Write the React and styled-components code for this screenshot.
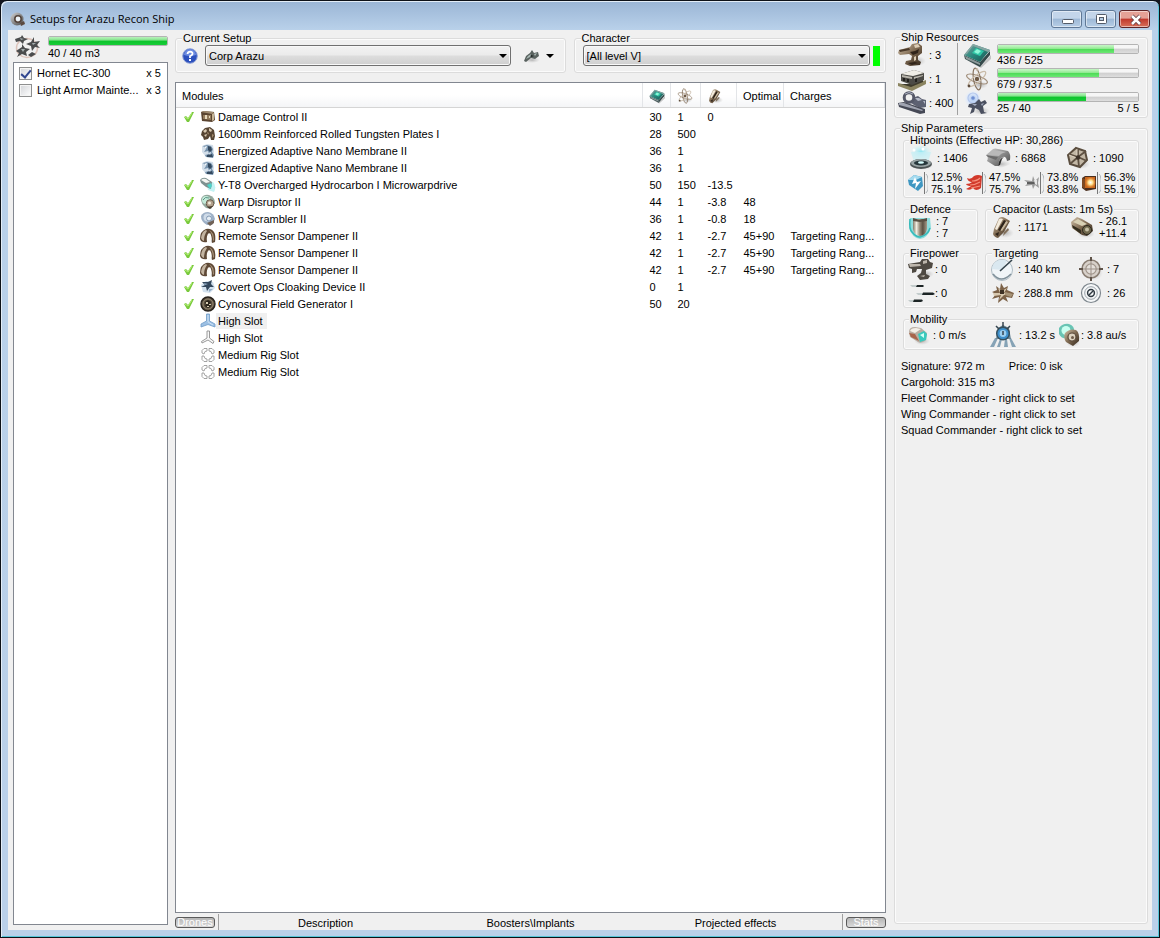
import React from 'react';
import styled, { createGlobalStyle } from 'styled-components';

const GlobalStyle = createGlobalStyle`
  * { box-sizing: border-box; }
  body {
    margin: 0;
    background: #14161f;
    color: #000;
    font: 11px/12px "Liberation Sans", Arial, sans-serif;
  }
  button, select, input { font: inherit; margin: 0; }
`;

/* ---------- icons ---------- */

/* Gradients shared by the icons; they live in the title bar icon. */
const gradients = (
  <defs>
    <linearGradient id="steel" x1="0" y1="0" x2="1" y2="1">
      <stop offset="0" stopColor="#d6d6d6" /><stop offset=".5" stopColor="#8b8b8b" /><stop offset="1" stopColor="#4a4a4a" />
    </linearGradient>
    <linearGradient id="bronze" x1="0" y1="0" x2="1" y2="1">
      <stop offset="0" stopColor="#d3c3ab" /><stop offset=".5" stopColor="#7d6850" /><stop offset="1" stopColor="#33271c" />
    </linearGradient>
    <linearGradient id="barrel" x1="0" y1="0" x2="1" y2="0">
      <stop offset="0" stopColor="#857a68" /><stop offset=".25" stopColor="#f1ece0" /><stop offset=".5" stopColor="#8f8472" />
      <stop offset=".7" stopColor="#5b5143" /><stop offset="1" stopColor="#a69b88" />
    </linearGradient>
    <linearGradient id="teal" x1="0" y1="0" x2="1" y2="1">
      <stop offset="0" stopColor="#7fa6a2" /><stop offset=".5" stopColor="#27877c" /><stop offset="1" stopColor="#1c4f4d" />
    </linearGradient>
    <radialGradient id="cyanGlow">
      <stop offset="0" stopColor="#8fe6f2" /><stop offset="1" stopColor="#d6f5f9" stopOpacity="0" />
    </radialGradient>
    <radialGradient id="blueGlow">
      <stop offset="0" stopColor="#a9c4ee" /><stop offset=".6" stopColor="#dce8fa" /><stop offset="1" stopColor="#e6effb" stopOpacity="0" />
    </radialGradient>
    <radialGradient id="fireGlow">
      <stop offset="0" stopColor="#fff" /><stop offset=".4" stopColor="#ffe08a" /><stop offset="1" stopColor="#e0701a" stopOpacity="0" />
    </radialGradient>
    <radialGradient id="shade">
      <stop offset="0" stopColor="#999" stopOpacity=".7" /><stop offset="1" stopColor="#bbb" stopOpacity="0" />
    </radialGradient>
  </defs>
);

const resistBars = (
  <>
    <path d="M16.500 0V22" stroke="#777" />
    <path d="M18 2Q21 4 20 18L18 21" fill="none" stroke="#aeb4b8" />
  </>
);

const ICONS = {
  app: [16, 16, <>
    {gradients}
    <ellipse cx="11" cy="12" rx="5" ry="3.500" fill="url(#shade)" />
    <circle cx="7" cy="8" r="6.500" fill="url(#steel)" />
    <circle cx="8" cy="8" r="3.200" fill="#eef4f8" stroke="#54453c" strokeWidth="1.600" />
    <path d="M10 12L14 10L15 13L11 15z" fill="#5b4a40" />
  </>],
  drones: [28, 26, <>
    <ellipse cx="14" cy="14" rx="10.500" ry="9.500" fill="none" stroke="#dcc3ba" strokeWidth="1.500" />
    <path d="M2 5L8 3L9 1L11 4L15 5L11 7L10 10L7 7L3 8zM13 10L18 8L21 3L21 8L27 7L24 11L27 14L22 13L19 17L18 12zM3 17L9 13L9 10L12 14L17 15L13 18L14 22L9 20L4 23L6 19zM15 21L19 18L23 20L18 23z" fill="#4a4c4d" />
    <path d="M7 4L11 5L8 6zM19 9L23 9L20 11zM8 15L12 15L10 18z" fill="#a2abac" />
  </>],
  help: [16, 16, <>
    <circle cx="8" cy="8" r="7.300" fill="#2c50bd" stroke="#8fa1d6" />
    <path d="M2 7A6 6 0 0 1 14 7Q8 9 2 7z" fill="#6c8be0" />
    <path d="M5.500 6Q5.800 3.600 8.200 3.600Q10.800 3.800 10.500 6Q10.200 7.200 8 8.200L8 10" fill="none" stroke="#fff" strokeWidth="1.800" />
    <rect x="7" y="11" width="2" height="2" fill="#fff" />
  </>],
  ship: [18, 14, <>
    <ellipse cx="9" cy="11" rx="8" ry="3" fill="url(#shade)" />
    <path d="M1 12L3 7L7 4L9 1L11 4L15 3L16 7L12 10L8 9L3 13z" fill="#59625f" />
    <path d="M5 7L8 5L7 8L3 10zM11 5L14 4L12 7z" fill="#a9b8b4" />
    <path d="M8 6L11 7L8 8z" fill="#1c2523" />
  </>],
  turret: [28, 24, <>
    <ellipse cx="19" cy="18" rx="9" ry="5" fill="url(#shade)" />
    <path d="M1 7L12 4L14 1L20 0L24 3L24 10L20 13L20 17L23 19L22 22L12 23L7 21L8 18L13 17L14 13L11 11L2 12L0 10z" fill="url(#bronze)" />
    <path d="M1 7L11 5L12 7L2 9z" fill="#4b3a2a" />
    <path d="M16 2L20 1L22 4L17 5zM16 14L18 13L18 17L16 18z" fill="#dccdb5" />
    <path d="M12 9L17 8L21 6L20 10L15 12zM10 20L17 19L20 20L14 22z" fill="#30241a" />
  </>],
  launcher: [28, 24, <>
    <path d="M0 16L13 19L28 13L28 17L14 24L0 19z" fill="#8b8460" />
    <path d="M3 17L13 20L25 15L25 13L13 17z" fill="#3d3a2c" />
    <path d="M3 7L16 3L26 6L26 13L14 18L3 14z" fill="#4c4b46" />
    <path d="M3 7L16 3L26 6L15 9z" fill="#f0eee6" />
    <path d="M4 8L14 10L14 12L4 10zM16 10L25 8V9L16 12z" fill="#b9b6ac" />
    <path d="M5 11H7V14H5zM9 12H11V15H9zM17 12L19 11V15L17 15z" fill="#22211d" />
  </>],
  calibration: [28, 24, <>
    <path d="M14 7L20 5L24 8L28 9L28 16L22 17L16 14L12 11z" fill="#5d6172" />
    <path d="M17 7L21 7L24 9L20 10zM25 10L27 10L27 13z" fill="#b5bac8" />
    <circle cx="11" cy="6.500" r="4.800" fill="#f0f0f0" stroke="#555868" strokeWidth="3" />
    <path d="M7 3Q11 0 15 3" fill="none" stroke="#a8adbd" />
    <path d="M0 12L6 11L27 18L27 22L22 23L1 16z" fill="#464956" />
    <path d="M1 12L6 12L25 19L24 20L1 14z" fill="#a0a4b1" />
  </>],
  cpu: [28, 26, <>
    <path d="M5 19L18 24L28 13V17L18 26z" fill="#c3c3c3" />
    <path d="M1 13L17 20L27 9L27 13L17 25L2 17z" fill="#35494a" />
    <path d="M2 14L17 21V23L3 17z" fill="#8c9a9a" />
    <path d="M1 13L10 2L27 8L17 20z" fill="url(#teal)" />
    <path d="M10 2L27 8L25 10L10 4L4 12L1 13z" fill="#86a5a2" />
    <path d="M9 11L13 6L21 9L17 14z" fill="#2fc7a6" />
    <path d="M11 10L14 7L18 9L15 12z" fill="#8df6d8" />
  </>],
  power: [24, 24, <>
    <ellipse cx="15" cy="18" rx="8" ry="4" fill="url(#shade)" />
    <g fill="none" stroke="#a3917e" strokeWidth="1.200">
      <ellipse cx="12" cy="12" rx="11" ry="3.500" transform="rotate(20 12 12)" />
      <ellipse cx="12" cy="12" rx="11" ry="3.500" transform="rotate(80 12 12)" stroke="#86735f" />
      <ellipse cx="12" cy="12" rx="11" ry="3.500" transform="rotate(140 12 12)" stroke="#c9bba8" />
    </g>
    <circle cx="12" cy="12" r="2.200" fill="#6e5a46" />
    <circle cx="12" cy="2.500" r="1.300" fill="#c8bba9" />
    <circle cx="4" cy="19" r="1.400" fill="#5e4c3c" />
  </>],
  dronebay: [28, 26, <>
    <circle cx="10" cy="9" r="9" fill="url(#blueGlow)" />
    <circle cx="10" cy="8" r="5" fill="none" stroke="#b3c7ec" strokeWidth="1.200" />
    <circle cx="10" cy="8" r="1.800" fill="#6f8fd2" />
    <ellipse cx="18" cy="21" rx="9" ry="4" fill="url(#shade)" />
    <path d="M6 14L12 13L16 9L18 12L22 10L24 13L20 16L21 22L24 23L18 24L16 20L12 18L11 22L7 24L9 18L5 17z" fill="#4b5060" />
    <path d="M9 14L14 14L12 16zM18 14L21 13L19 16z" fill="#a3aabd" />
  </>],
  shield: [24, 24, <>
    <ellipse cx="12" cy="6" rx="12" ry="8" fill="url(#cyanGlow)" />
    <path d="M2 6L22 6L19 16L5 16z" fill="#c7eff5" opacity=".7" />
    <circle cx="5" cy="4" r="1.500" fill="#fff" /><circle cx="14" cy="3" r="1.500" fill="#fff" />
    <ellipse cx="13" cy="20" rx="11" ry="4" fill="url(#shade)" />
    <ellipse cx="12" cy="18" rx="11" ry="5" fill="#4d5455" />
    <ellipse cx="12" cy="17" rx="10" ry="4" fill="#9aa5a6" />
    <ellipse cx="12" cy="17" rx="7" ry="2.600" fill="#27373b" />
    <ellipse cx="12" cy="16.500" rx="3" ry="1.300" fill="#d8ffff" />
  </>],
  armor: [25, 22, <>
    <path d="M4 15L15 21L25 17L22 13L12 13z" fill="url(#shade)" />
    <path d="M0 8L7 2Q9 1 12 2L22 4Q25 7 24 13L21 14Q20 9 17 10Q13 11 12 19L9 19L1 14Q3 10 0 8z" fill="url(#steel)" />
    <path d="M7 3L20 5Q15 6 13 9L2 8z" fill="#b9b9b9" />
    <path d="M0 8L12 10L10 13L2 10z" fill="#6b6b6b" />
    <path d="M12 19Q13 11 18 10L16 12L14 18z" fill="#2b2b2b" />
  </>],
  hull: [24, 24, <>
    <ellipse cx="15" cy="18" rx="9" ry="5" fill="url(#shade)" />
    <path d="M10 2L19 5L21 14L14 21L4 18L2 9z" fill="#c3b8a6" stroke="#5a4d3e" strokeWidth="2" />
    <path d="M12 11V2M12 11L20 5M12 11L21 15M12 11L13 21M12 11L4 18M12 11L3 8" stroke="#5e5142" strokeWidth="1.800" />
    <path d="M11 10L11 3M3 9L11 12" stroke="#e6dccb" strokeWidth=".8" />
    <circle cx="12" cy="11.500" r="2.200" fill="#3c3128" />
  </>],
  em: [20, 22, <>
    <path d="M0 8L6 3L14 5L15 14L10 19L1 13z" fill="#3f97c2" />
    <path d="M0 8L6 3L14 5L8 8z" fill="#a5dbef" />
    <path d="M7 5L4 12L8 11L7 17L13 9L9 10z" fill="#fff" />
    {resistBars}
  </>],
  thermal: [20, 22, <>
    <path d="M1 6Q5 8 8 4Q12 2 16 4L15 16Q10 20 7 16Q4 19 0 17Q4 15 5 14Q1 14 0 12Q4 12 6 10Q2 10 1 6z" fill="#d23a2c" />
    <path d="M6 9Q11 9 14 6M4 13Q9 13 14 10M5 16Q10 15 14 14" fill="none" stroke="#f5917d" strokeWidth="1.200" />
    {resistBars}
  </>],
  kinetic: [20, 22, <>
    <path d="M0 8L8 9L9 4L11 9L15 5L14 11L15 16L11 13L9 17L8 13L1 14L4 11z" fill="#9b9b9b" />
    <path d="M3 10L10 10L12 11L10 12L3 12z" fill="#5e5e5e" />
    <path d="M10 8L13 8L13 13L11 12z" fill="#e8e8e8" />
    {resistBars}
  </>],
  explosive: [20, 22, <>
    <path d="M1 6L4 4L15 4L15 17L5 19L1 16z" fill="#4b2f1e" />
    <path d="M4 5H14V16H4z" fill="#c8661c" />
    <circle cx="9.500" cy="10.500" r="6" fill="url(#fireGlow)" />
    <path d="M1 6L4 7V17L1 15z" fill="#7e4a22" />
    {resistBars}
  </>],
  defence: [24, 24, <>
    <path d="M2 3L22 3L23 13Q19 24 12 24Q4 23 1 13z" fill="#8fdcdc" />
    <path d="M2 4Q1 14 4 17Q8 22 12 22Q20 20 22 13" fill="none" stroke="#35b9b9" strokeWidth="1.500" />
    <path d="M5 4H19V14Q18 20 12 21Q6 20 5 14z" fill="url(#barrel)" />
    <path d="M5 3L12 5L19 3V6L12 7L5 6z" fill="#5a5043" />
  </>],
  capacitor: [24, 24, <>
    <ellipse cx="15" cy="18" rx="9" ry="5" fill="url(#shade)" />
    <path d="M9 3Q12 1 15 3L20 6L14 17L8 23Q4 22 3 19L4 14z" fill="url(#bronze)" />
    <path d="M9 4Q11 3 13 4L7 15L5 14z" fill="#f3ebdc" />
    <path d="M16 6L18 7L12 16L10 15z" fill="#c9b99f" />
    <path d="M14 5L16 6L10 16L8 15zM5 19L9 17L8 21z" fill="#2e241b" />
    <path d="M14 17L18 13L19 15L13 21z" fill="#82705b" />
  </>],
  recharge: [24, 24, <>
    <ellipse cx="16" cy="19" rx="9" ry="4" fill="url(#shade)" />
    <path d="M1 7L7 2L12 4L22 10L23 16L17 21L12 20L2 13z" fill="url(#bronze)" />
    <path d="M3 7L8 4L17 9L12 11z" fill="#d8d0b4" />
    <path d="M2 10L11 15V19L3 13z" fill="#332d1e" />
    <circle cx="17" cy="15" r="4.500" fill="#6f674c" stroke="#2c281d" />
    <circle cx="17" cy="14.500" r="2" fill="#c5bfa5" />
  </>],
  gun: [26, 24, <>
    <ellipse cx="18" cy="17" rx="8" ry="4" fill="url(#shade)" />
    <path d="M0 7L12 5L14 2L20 2L22 5L25 6L24 11L18 13L18 17L22 19L20 22L12 23L9 19L13 16L14 12L9 12L8 15L4 16L4 12L1 11z" fill="#4e4942" />
    <path d="M1 7L12 7L13 9L2 10zM15 4L19 3L19 6L15 7zM12 19L17 18L16 20z" fill="#bcb5ab" />
  </>],
  missiles: [28, 24, <>
    <path d="M2 4H13V6H4zM8 12H23V14H10zM0 19H12V21H2z" fill="#c3cccc" />
    <path d="M9 4H15L16 5L15 6H8zM15 11.500H25L27 13L25 14H14zM6 18.500H14L15 20L13 21H5z" fill="#1c2425" />
  </>],
  radar: [24, 24, <>
    <circle cx="12" cy="13" r="10.500" fill="#f0f5f8" stroke="#aebbc3" />
    <path d="M2 12A10 10 0 0 1 17 4L12 13z" fill="#dae8f0" />
    <path d="M10 14L22 3" stroke="#34434c" strokeWidth="1.600" />
    <path d="M3 17Q11 27 21 17" fill="none" stroke="#7f909a" strokeWidth="1.500" />
  </>],
  crosshair: [24, 24, <>
    <ellipse cx="15" cy="16" rx="9" ry="7" fill="url(#shade)" />
    <circle cx="12" cy="12" r="9" fill="#d8d1ca" stroke="#8a7e73" strokeWidth="1.500" />
    <circle cx="12" cy="12" r="5.200" fill="#e4dfda" stroke="#a0958b" strokeWidth="1.200" />
    <path d="M12 0V24M0 12H24" stroke="#9b9087" />
    <path d="M12 0V4M12 20V24M0 12H4M20 12H24" stroke="#5f5349" strokeWidth="2" />
  </>],
  scan: [24, 24, <>
    <path d="M2 11L7 9L6 5L10 8L11 2L14 7L18 5L17 9L24 12L22 17L16 16L18 21L13 18L8 22L9 16L2 18L6 13z" fill="#7c6248" />
    <path d="M3 12L10 12L8 7L12 10L17 7L14 12L21 13L14 14L9 19L11 14L4 15z" fill="#d7c8af" />
    <path d="M10 9L14 9L14 13L10 13z" fill="#3d3024" />
    <path d="M15 11L23 13L21 16L15 14z" fill="#a79478" />
  </>],
  signature: [22, 22, <>
    <circle cx="11" cy="11" r="9.500" fill="#f5f7f8" stroke="#7d868d" strokeWidth="1.200" />
    <circle cx="11" cy="11" r="6.300" fill="none" stroke="#99a1a8" />
    <circle cx="11" cy="11" r="3.400" fill="none" stroke="#303a42" strokeWidth="1.500" />
    <path d="M9 13L13 9" stroke="#303a42" strokeWidth="1.500" />
  </>],
  engine: [22, 22, <>
    <ellipse cx="14" cy="17" rx="8" ry="4" fill="url(#shade)" />
    <path d="M1 8Q1 3 7 3L13 4L19 9L18 16Q13 20 10 18L2 13z" fill="#b9ada2" />
    <path d="M2 7Q3 4 8 4L13 5L7 9z" fill="#f4efe7" />
    <path d="M1 9L7 10L11 17L3 13z" fill="#a8644b" />
    <path d="M10 10L16 7L19 10L18 16L12 18z" fill="#39c9bd" />
    <path d="M12 11L16 9L16 14z" fill="#d2fff6" />
  </>],
  agility: [26, 26, <>
    <path d="M5 16L8 16L4 25L0 25zM10 17L12 17L10 25L7 25zM15 17L17 17L18 25L14 25zM19 16L21 16L26 25L22 25z" fill="#86a3b6" />
    <path d="M6 17L8 6L13 3L19 6L21 17z" fill="#6d8796" />
    <circle cx="13" cy="11.500" r="6.300" fill="#3d8fcb" stroke="#35505f" strokeWidth="1.500" />
    <circle cx="13" cy="11.500" r="3.400" fill="#9ccff0" />
    <path d="M13 0V5M6 4L9 7M20 4L17 7M13 9V13" stroke="#374650" strokeWidth="1.500" />
  </>],
  warp: [22, 24, <>
    <ellipse cx="15" cy="20" rx="7" ry="4" fill="url(#shade)" />
    <path d="M1 5Q5 0 11 1Q17 3 16 9L12 15Q4 17 1 11z" fill="#69c4b4" />
    <circle cx="8" cy="7.500" r="4.500" fill="#c9fff1" />
    <path d="M7 10Q12 5 18 7Q22 10 21 18L15 23L8 19Q5 14 7 10z" fill="url(#bronze)" />
    <circle cx="14" cy="14" r="4" fill="#ddd2bf" stroke="#59493a" strokeWidth="1.200" />
    <circle cx="14.500" cy="14.500" r="1.500" fill="#6e5c4a" />
  </>],
  check: [12, 12, <>
    <path d="M1 6L3 5L5 7L9 1L11 1L6 11L4 11z" fill="#79c93c" />
    <path d="M2 6L5 8L9 2" fill="none" stroke="#b4ef76" />
  </>],
  damage: [16, 16, <>
    <path d="M1 3L4 2L14 3L15 11L12 13L2 12z" fill="#5a4431" />
    <path d="M1 3L4 2L14 3L12 5z" fill="#a08c72" />
    <path d="M3 6H11V11L3 10z" fill="#937b5c" />
    <path d="M5 6H7V10H5zM9 7H10V9H9z" fill="#e6d8bd" />
    <path d="M12 5L14 4V11L12 12z" fill="#c6b596" />
  </>],
  plates: [16, 16, <>
    <path d="M2 5L5 2L10 1L14 4L15 10L14 14L11 14L10 10L8 13L4 14L3 11L1 9z" fill="#574533" />
    <path d="M3 5L6 3L7 5L5 7zM9 2L12 4L11 6L9 5zM4 9L7 8L6 11z" fill="#d9cab2" />
    <path d="M7 6L9 7L8 9zM12 8L14 9L12 12z" fill="#a38b6d" />
  </>],
  membrane: [16, 16, <>
    <path d="M2 3L7 1L13 2L14 8L13 14L6 14L2 9z" fill="#d4dfea" />
    <path d="M3 3L7 2L11 3L13 6L12 9L14 12L13 15L6 14L5 12L9 11L8 8L4 9L6 6z" fill="#7793ad" />
    <path d="M8 3L11 4L12 7L10 9L8 7zM7 12L12 11L13 14L7 14z" fill="#34495e" />
    <path d="M4 4L7 3L6 6zM9 10L11 9L10 12z" fill="#f2f8fc" />
  </>],
  mwd: [16, 16, <>
    <path d="M6 5L13 5Q17 9 14 15L8 13z" fill="#c4f2f3" />
    <path d="M0 3Q2 0 6 1L12 5L11 12L6 10L1 6z" fill="#7f9291" />
    <path d="M1 3Q3 1 6 2L10 5L6 6z" fill="#f4f5f1" />
    <path d="M7 8L11 6L12 9L10 12z" fill="#4fd2c8" />
  </>],
  disruptor: [16, 16, <>
    <path d="M1 5Q3 0 9 1Q15 3 15 9L11 15L6 14Q1 10 1 5z" fill="#93a79c" />
    <circle cx="6" cy="6" r="4" fill="#c3ead9" />
    <path d="M3 6Q5 2 9 4" fill="none" stroke="#5c9484" />
    <circle cx="10" cy="9.500" r="3.800" fill="#b3a28d" stroke="#6a5b4d" />
    <circle cx="9.500" cy="9" r="1.500" fill="#f3eadc" />
    <path d="M7 13L13 12L10 15z" fill="#4a3a2e" />
  </>],
  scrambler: [16, 16, <>
    <path d="M1 5Q3 1 8 1Q14 2 15 8L12 14L7 14Q1 11 1 5z" fill="#9db0c6" />
    <circle cx="7.500" cy="6.500" r="4" fill="#cfdbe8" />
    <circle cx="9" cy="7.500" r="2.500" fill="#e6eef5" stroke="#8299b4" />
    <path d="M7 12L14 9L14 12L10 15z" fill="#716257" />
  </>],
  dampener: [16, 16, <>
    <ellipse cx="12" cy="13" rx="4" ry="2.500" fill="url(#shade)" />
    <path d="M0 11Q0 3 6 1Q11 0 14 4Q16 7 15 14L12 15Q12 8 10 5Q7 7 7 14Q4 15 1 13z" fill="#5f4936" />
    <path d="M1 10Q2 3 6 2L7 3Q4 7 4 13Q2 13 1 10z" fill="#c3b4a0" />
    <path d="M7 14Q6 7 9 5Q11 8 11 15z" fill="#fdfbf7" />
    <path d="M9 2Q14 4 14 12L13 13Q13 6 9 2z" fill="#a8947c" />
  </>],
  cloak: [16, 16, <>
    <path d="M1 6L6 2L13 3L15 9L10 14L3 13z" fill="#d3e1ee" />
    <path d="M2 3L8 3L12 1L11 5L14 8L10 8L7 12L6 8L1 8L5 6z" fill="#33475c" />
    <path d="M4 4L8 5L5 6zM9 10L13 10L9 13z" fill="#8faac4" />
  </>],
  cyno: [16, 16, <>
    <circle cx="8" cy="8" r="7" fill="#574c3d" stroke="#26201a" strokeWidth="1.400" />
    <circle cx="8" cy="8" r="5" fill="none" stroke="#a5977d" strokeWidth=".8" />
    <path d="M5 6L8 4L11 6L10 8L11 10L8 12L5 10L6 8z" fill="#2b241b" />
    <path d="M6 6H8V8H6zM9 8H11V9H9zM7 10H9V11H7z" fill="#d9cdb2" />
  </>],
  highActive: [16, 16, <>
    <path d="M6.500 1H9.500V8L15 11V14L8 11.500L1 14V11L6.500 8z" fill="#9cc0e4" stroke="#6f9ac6" strokeWidth=".8" />
    <path d="M8 2V9L13 12" fill="none" stroke="#cfe2f5" />
  </>],
  high: [16, 16, <>
    <path d="M7 1H9.500V8L14 11.500L13 13.500L8 10L2 13L1.500 11.500L7 8z" fill="#f8f8f8" stroke="#8e8e8e" strokeWidth=".9" />
  </>],
  rig: [16, 16, <>
    <g fill="none" stroke="#9a9a9a" strokeWidth=".9">
      <path d="M7 1.500H4L2 3.500V6L4 7L5 4.500L7 4z" />
      <path d="M9 1.500H12L14 3.500V6L12 7L11 4.500L9 4z" />
      <path d="M7 14.500H4L2 12.500V9L4 9L5 11.500L7 12z" />
      <path d="M9 14.500H12L14 12.500V9L12 9L11 11.500L9 12z" />
    </g>
  </>],
  min: [32, 18, <rect x="10.500" y="8.500" width="11" height="4" rx="1" fill="#fff" stroke="#535b68" />],
  max: [32, 18, <>
    <rect x="10.500" y="3.500" width="10" height="9" rx="1" fill="#fff" stroke="#535b68" />
    <rect x="13.500" y="6.500" width="4" height="3" fill="#b4cbe2" stroke="#535b68" />
  </>],
  close: [32, 18, <>
    <path d="M12 5L20 13M20 5L12 13" stroke="#5e3a40" strokeWidth="4" />
    <path d="M12 5L20 13M20 5L12 13" stroke="#fff" strokeWidth="2.500" />
  </>],
  arrow: [8, 4, <path d="M0 0H8L4 4z" fill="#000" />],
};

const Svg = styled.svg`
  display: block;
  flex: none;
`;

function Icon({ name, w, h }) {
  const [vw, vh, body] = ICONS[name];
  return (
    <Svg width={w || vw} height={h || vh} viewBox={`0 0 ${vw} ${vh}`} aria-hidden="true">
      {body}
    </Svg>
  );
}

/* ---------- window chrome ---------- */

const Window = styled.div`
  display: flex;
  flex-direction: column;
  min-height: 100vh;
  padding: 0 7px 7px;
  border: 1px solid #0d1118;
  border-radius: 7px 7px 0 0;
  background: linear-gradient(#9ab5d5, #b9d1ea 29px, #bad0e9);
  box-shadow: inset 1px 1px 0 #e3edf7, inset -1px -1px 0 #56c5d8;
`;

const TitleBar = styled.header`
  display: flex;
  align-items: center;
  gap: 4px;
  height: 29px;
  padding: 6px 2px 0 2px;
`;

const Title = styled.h1`
  flex: 1;
  margin: 0;
  font: 11px/16px "Open Sans", "Noto Sans", sans-serif;
`;

const WindowButtons = styled.div`
  display: flex;
  gap: 3px;
`;

const WindowButton = styled.button`
  display: grid;
  place-items: center;
  width: 31px;
  height: 18px;
  padding: 0;
  overflow: hidden;
  border: 1px solid ${(p) => (p.$close ? '#5e2426' : '#5f7896')};
  border-radius: 3px;
  box-shadow: inset 0 0 0 1px rgba(255, 255, 255, 0.5);
  background: ${(p) =>
    p.$close
      ? 'linear-gradient(#e5a196 45%, #c0382c 50%, #d8705a)'
      : 'linear-gradient(#c3d5ea 45%, #9db8d6 50%, #b7cee6)'};
`;

const Client = styled.main`
  flex: 1;
  display: flex;
  background: #f0f0f0;
  padding: 0 4px 0 5px;
`;

/* ---------- shared pieces ---------- */

const Group = styled.fieldset`
  min-width: 0;
  margin: 0;
  padding: ${(p) => p.$pad || '0 4px 2px'};
  border: 1px solid #dcdcdc;
  border-radius: 3px;
  box-shadow: inset 0 0 0 1px #fbfbfb;
  flex: ${(p) => (p.$grow ? '1' : 'none')};
`;

const Legend = styled.legend`
  margin-left: ${(p) => p.$indent || 0}px;
  padding: 0 1px;
  line-height: 12px;
  background: #f0f0f0;
`;

const Bar = styled.progress`
  appearance: none;
  display: block;
  width: 100%;
  height: 10px;
  border: 1px solid #b4b4b4;
  border-radius: 2px;
  overflow: hidden;
  background: #ddd;
  &::-webkit-progress-bar {
    background: linear-gradient(#f6f6f6 40%, #cfcfcf 50%, #dedede);
  }
  &::-webkit-progress-value {
    background: linear-gradient(${(p) => (p.$light ? '#c0f5c0 10%, #92ea92 45%, #4fdc58 55%, #6ce873' : '#b0efb4 10%, #7fe287 40%, #0cc42c 50%, #19cc38')});
  }
`;

/* ---------- drone column ---------- */

const DroneColumn = styled.aside`
  display: flex;
  flex-direction: column;
  width: 155px;
  margin-right: 7px;
  padding-bottom: 5px;
`;

const DroneHeader = styled.div`
  display: flex;
  gap: 7px;
  height: 32px;
  padding-top: 4px;
`;

const DroneBay = styled.label`
  flex: 1;
  padding-top: 2px;
  line-height: 14px;
`;

const DroneList = styled.ul`
  flex: 1;
  margin: 0;
  padding: 2px 6px 0 5px;
  list-style: none;
  background: #fff;
  border: 1px solid #828790;
`;

const DroneItem = styled.li`
  display: flex;
  justify-content: space-between;
  line-height: 17px;
`;

const DroneLabel = styled.label`
  display: flex;
  align-items: center;
  gap: 5px;
`;

const Tick = styled.input`
  appearance: none;
  display: grid;
  place-items: center;
  width: 13px;
  height: 13px;
  border: 1px solid #8e8f8f;
  background: linear-gradient(135deg, #d2d4d8, #fff);
  box-shadow: inset 0 0 0 1px #f4f4f4;
  &:checked::after {
    content: "";
    width: 4px;
    height: 8px;
    margin-bottom: 2px;
    border: solid #31478f;
    border-width: 0 2px 2px 0;
    transform: rotate(40deg);
  }
`;

/* ---------- centre column ---------- */

const Centre = styled.section`
  flex: 1;
  min-width: 0;
  display: flex;
  flex-direction: column;
  padding-top: 2px;
`;

const Choosers = styled.div`
  display: grid;
  grid-template-columns: 5fr 4fr;
  gap: 8px;
  margin-bottom: 9px;
`;

const ChooserRow = styled.div`
  display: flex;
  align-items: center;
  gap: ${(p) => p.$gap}px;
`;

const SelectBox = styled.div`
  flex: 1;
  display: grid;
  align-items: center;
  & > * { grid-area: 1 / 1; }
  & > svg { justify-self: end; margin-right: 4px; pointer-events: none; }
`;

const Select = styled.select`
  appearance: none;
  width: 100%;
  height: 21px;
  padding: 0 3px;
  color: #000;
  border: 1px solid #707070;
  border-radius: 3px;
  background: linear-gradient(#f2f2f2, #ebebeb 48%, #dddddd 52%, #cfcfcf);
  box-shadow: inset 0 0 0 1px #f8f8f8;
`;

const ShipMenu = styled.button`
  display: flex;
  align-items: center;
  gap: 5px;
  margin: 0 5px;
  padding: 0;
  border: 0;
  background: none;
`;

const SkillFlag = styled.span`
  width: 7px;
  height: 20px;
  background: #0f0;
`;

const ModuleBox = styled.div`
  flex: 1;
  background: #fff;
  border: 1px solid #828790;
`;

const ModuleTable = styled.table`
  width: 100%;
  table-layout: fixed;
  border-collapse: collapse;
`;

const HeadCell = styled.th`
  width: ${(p) => (p.$w ? `${p.$w}px` : 'auto')};
  height: 24px;
  padding: 2px 0 0 6px;
  text-align: left;
  font-weight: normal;
  background: linear-gradient(#fff 50%, #f4f5f7);
  border-right: 1px solid #e3e5e8;
  border-bottom: 1px solid #d5d5d5;
`;

const Cell = styled.td`
  height: 17px;
  padding: 0 0 0 7px;
  white-space: nowrap;
  overflow: hidden;
`;

const ModuleName = styled.div`
  display: grid;
  grid-template-columns: 17px 16px auto;
  align-items: center;
  justify-content: start;
`;

const NameText = styled.span`
  padding: 2px 4px 2px 2px;
  background: ${(p) => (p.$marked ? '#f0f0f0' : 'transparent')};
`;

const Spacer = styled.tr`
  height: 1px;
`;

const Footer = styled.nav`
  display: flex;
  align-items: center;
  gap: 3px;
  height: 17px;
`;

const PanelToggle = styled.button`
  width: 40px;
  height: 11px;
  padding: 0;
  line-height: 9px;
  color: #fff;
  overflow: hidden;
  border: 1px solid #5a5a5a;
  border-radius: 3px;
  background: linear-gradient(#b5b5b5, #dadada);
  margin-top: 2px;
`;

const Tabs = styled.div`
  flex: 1;
  align-self: stretch;
  display: grid;
  grid-template-columns: repeat(3, 1fr);
  padding: 2px 4px 0;
  border: solid #a0a0a0;
  border-width: 0 1px;
  margin-top: 1px;
`;

const Tab = styled.button`
  padding: 0;
  border: 0;
  color: #000;
  background: none;
`;

/* ---------- stats column ---------- */

const StatsColumn = styled.aside`
  display: flex;
  flex-direction: column;
  gap: 4px;
  width: 254px;
  margin-left: 8px;
  padding: 1px 0 6px;
`;

const Resources = styled.div`
  display: grid;
  grid-template-columns: 60px 1fr;
  gap: 5px;
`;

const Stack = styled.div`
  display: flex;
  flex-direction: column;
  ${(p) => p.$divider && 'border-right: 1px solid #a0a0a0;'}
`;

const Row = styled.div`
  display: flex;
  align-items: center;
  gap: ${(p) => p.$gap || 3}px;
  height: ${(p) => p.$h || 24}px;
`;

const IconSlot = styled.span`
  display: grid;
  place-items: center;
  width: ${(p) => p.$w}px;
  flex: none;
`;

const Gauge = styled.label`
  flex: 1;
`;

const GaugeText = styled.span`
  display: flex;
  justify-content: space-between;
`;

const Columns = styled.div`
  display: grid;
  grid-template-columns: ${(p) => p.$cols};
  row-gap: 4px;
  column-gap: ${(p) => p.$gap || 0}px;
  margin-top: ${(p) => p.$top || 0}px;
`;

const Groups = styled.div`
  display: grid;
  gap: 5px;
`;

const Lines = styled.span`
  white-space: pre;
  line-height: 12px;
`;

const Notes = styled.div`
  padding: 8px 0 0;
  margin-left: -2px;
  line-height: 16px;
`;

const Price = styled.span`
  margin-left: 24px;
`;

function Stat({ icon, w, h, gap, children }) {
  return (
    <Row $h={h} $gap={gap}>
      <IconSlot $w={w}><Icon name={icon} /></IconSlot>
      <Lines>{children}</Lines>
    </Row>
  );
}

const MODULES = [
  [1, 'damage', 'Damage Control II', '30', '1', '0'],
  [0, 'plates', '1600mm Reinforced Rolled Tungsten Plates I', '28', '500'],
  [0, 'membrane', 'Energized Adaptive Nano Membrane II', '36', '1'],
  [0, 'membrane', 'Energized Adaptive Nano Membrane II', '36', '1'],
  [1, 'mwd', 'Y-T8 Overcharged Hydrocarbon I Microwarpdrive', '50', '150', '-13.5'],
  [1, 'disruptor', 'Warp Disruptor II', '44', '1', '-3.8', '48'],
  [1, 'scrambler', 'Warp Scrambler II', '36', '1', '-0.8', '18'],
  [1, 'dampener', 'Remote Sensor Dampener II', '42', '1', '-2.7', '45+90', 'Targeting Rang...'],
  [1, 'dampener', 'Remote Sensor Dampener II', '42', '1', '-2.7', '45+90', 'Targeting Rang...'],
  [1, 'dampener', 'Remote Sensor Dampener II', '42', '1', '-2.7', '45+90', 'Targeting Rang...'],
  [1, 'cloak', 'Covert Ops Cloaking Device II', '0', '1'],
  [1, 'cyno', 'Cynosural Field Generator I', '50', '20'],
  [0, 'highActive', 'High Slot'],
  [0, 'high', 'High Slot'],
  [0, 'rig', 'Medium Rig Slot'],
  [0, 'rig', 'Medium Rig Slot'],
];

function Drones() {
  return (
    <DroneColumn>
      <DroneHeader>
        <Icon name="drones" />
        <DroneBay>
          <Bar value={40} max={40} />
          40 / 40 m3
        </DroneBay>
      </DroneHeader>
      <DroneList>
        <DroneItem>
          <DroneLabel><Tick type="checkbox" defaultChecked />Hornet EC-300</DroneLabel>
          <span>x 5</span>
        </DroneItem>
        <DroneItem>
          <DroneLabel><Tick type="checkbox" />Light Armor Mainte...</DroneLabel>
          <span>x 3</span>
        </DroneItem>
      </DroneList>
    </DroneColumn>
  );
}

function Modules() {
  return (
    <ModuleBox>
      <ModuleTable>
        <thead>
          <tr>
            <HeadCell>Modules</HeadCell>
            <HeadCell $w={28} aria-label="CPU"><Icon name="cpu" w={16} h={16} /></HeadCell>
            <HeadCell $w={30} aria-label="Power grid"><Icon name="power" w={16} h={16} /></HeadCell>
            <HeadCell $w={36} aria-label="Capacitor"><Icon name="capacitor" w={16} h={16} /></HeadCell>
            <HeadCell $w={47}>Optimal</HeadCell>
            <HeadCell $w={101}>Charges</HeadCell>
          </tr>
        </thead>
        <tbody>
          <Spacer />
          {MODULES.map(([active, icon, name, ...values], i) => (
            <tr key={i}>
              <Cell>
                <ModuleName>
                  <span>{active ? <Icon name="check" /> : null}</span>
                  <Icon name={icon} />
                  <NameText $marked={icon === 'highActive'}>{name}</NameText>
                </ModuleName>
              </Cell>
              {[0, 1, 2, 3, 4].map((c) => (
                <Cell key={c}>{values[c]}</Cell>
              ))}
            </tr>
          ))}
        </tbody>
      </ModuleTable>
    </ModuleBox>
  );
}

function Stats() {
  return (
    <StatsColumn>
      <Group $pad="0 8px 2px 3px">
        <Legend $indent={2}>Ship Resources</Legend>
        <Resources>
          <Stack $divider>
            <Stat icon="turret" w={28}>: 3</Stat>
            <Stat icon="launcher" w={28}>: 1</Stat>
            <Stat icon="calibration" w={28}>: 400</Stat>
          </Stack>
          <Stack>
            <Row $gap={6}>
              <IconSlot $w={28}><Icon name="cpu" /></IconSlot>
              <Gauge><Bar $light value={436} max={525} /><GaugeText>436 / 525</GaugeText></Gauge>
            </Row>
            <Row $gap={6}>
              <IconSlot $w={28}><Icon name="power" /></IconSlot>
              <Gauge><Bar $light value={679} max={937.5} /><GaugeText>679 / 937.5</GaugeText></Gauge>
            </Row>
            <Row $gap={6}>
              <IconSlot $w={28}><Icon name="dronebay" /></IconSlot>
              <Gauge>
                <Bar value={25} max={40} />
                <GaugeText><span>25 / 40</span><span>5 / 5</span></GaugeText>
              </Gauge>
            </Row>
          </Stack>
        </Resources>
      </Group>

      <Group $grow $pad="0 8px 2px">
        <Legend $indent={-3}>Ship Parameters</Legend>
        <Groups>
          <Group>
            <Legend $indent={1}>Hitpoints (Effective HP: 30,286)</Legend>
            <Columns $cols="78px 79px 1fr">
              <Stat icon="shield" w={25} gap={4}>: 1406</Stat>
              <Stat icon="armor" w={25} gap={4}>: 6868</Stat>
              <Stat icon="hull" w={25}>: 1090</Stat>
            </Columns>
            <Columns $cols="58px 58px 57px 1fr" $top={1}>
              <Stat icon="em" w={20}>{'12.5%\n75.1%'}</Stat>
              <Stat icon="thermal" w={20}>{'47.5%\n75.7%'}</Stat>
              <Stat icon="kinetic" w={20}>{'73.8%\n83.8%'}</Stat>
              <Stat icon="explosive" w={20}>{'56.3%\n55.1%'}</Stat>
            </Columns>
          </Group>
          <Columns $cols="75px 1fr" $gap={7}>
            <Group>
              <Legend $indent={1}>Defence</Legend>
              <Stat icon="defence" w={24} h={24} gap={4}>{': 7\n: 7'}</Stat>
            </Group>
            <Group>
              <Legend $indent={2}>Capacitor (Lasts: 1m 5s)</Legend>
              <Columns $cols="80px 1fr">
                <Stat icon="capacitor" w={24} h={24} gap={4}>: 1171</Stat>
                <Stat icon="recharge" w={24} h={24} gap={5}>{'- 26.1\n+11.4'}</Stat>
              </Columns>
            </Group>
          </Columns>
          <Columns $cols="75px 1fr" $gap={7}>
            <Group $pad="0 4px 4px">
              <Legend $indent={1}>Firepower</Legend>
              <Columns $cols="1fr">
                <Stat icon="gun" w={24} h={20}>: 0</Stat>
                <Stat icon="missiles" w={24} h={20}>: 0</Stat>
              </Columns>
            </Group>
            <Group $pad="0 4px 4px">
              <Legend $indent={2}>Targeting</Legend>
              <Columns $cols="89px 1fr">
                <Stat icon="radar" w={24} h={20} gap={4}>: 140 km</Stat>
                <Stat icon="crosshair" w={24} h={20} gap={4}>: 7</Stat>
                <Stat icon="scan" w={24} h={20} gap={4}>: 288.8 mm</Stat>
                <Stat icon="signature" w={24} h={20} gap={4}>: 26</Stat>
              </Columns>
            </Group>
          </Columns>
          <Group $pad="0 4px 4px">
            <Legend $indent={1}>Mobility</Legend>
            <Columns $cols="82px 68px 1fr">
              <Stat icon="engine" w={22} h={20}>: 0 m/s</Stat>
              <Stat icon="agility" w={26} h={20}>: 13.2 s</Stat>
              <Stat icon="warp" w={22} h={20} gap={1}>: 3.8 au/s</Stat>
            </Columns>
          </Group>
        </Groups>
        <Notes>
          <div>Signature: 972 m<Price>Price: 0 isk</Price></div>
          <div>Cargohold: 315 m3</div>
          <div>Fleet Commander - right click to set</div>
          <div>Wing Commander - right click to set</div>
          <div>Squad Commander - right click to set</div>
        </Notes>
      </Group>
    </StatsColumn>
  );
}

export default function App() {
  return (
    <>
      <GlobalStyle />
      <Window>
        <TitleBar>
          <Icon name="app" />
          <Title>Setups for Arazu Recon Ship</Title>
          <WindowButtons>
            <WindowButton aria-label="Minimize"><Icon name="min" /></WindowButton>
            <WindowButton aria-label="Maximize"><Icon name="max" /></WindowButton>
            <WindowButton $close aria-label="Close"><Icon name="close" /></WindowButton>
          </WindowButtons>
        </TitleBar>
        <Client>
          <Drones />
          <Centre>
            <Choosers>
              <Group $pad="1px 6px 6px">
                <Legend>Current Setup</Legend>
                <ChooserRow $gap={7}>
                  <Icon name="help" />
                  <SelectBox>
                    <Select aria-label="Current setup"><option>Corp Arazu</option></Select>
                    <Icon name="arrow" />
                  </SelectBox>
                  <ShipMenu aria-label="Ship menu">
                    <Icon name="ship" />
                    <Icon name="arrow" />
                  </ShipMenu>
                </ChooserRow>
              </Group>
              <Group $pad="1px 5px 6px 8px">
                <Legend $indent={-2}>Character</Legend>
                <ChooserRow $gap={3}>
                  <SelectBox>
                    <Select aria-label="Character"><option>[All level V]</option></Select>
                    <Icon name="arrow" />
                  </SelectBox>
                  <SkillFlag />
                </ChooserRow>
              </Group>
            </Choosers>
            <Modules />
            <Footer>
              <PanelToggle>Drones</PanelToggle>
              <Tabs>
                <Tab>Description</Tab>
                <Tab>Boosters\Implants</Tab>
                <Tab>Projected effects</Tab>
              </Tabs>
              <PanelToggle>Stats</PanelToggle>
            </Footer>
          </Centre>
          <Stats />
        </Client>
      </Window>
    </>
  );
}
